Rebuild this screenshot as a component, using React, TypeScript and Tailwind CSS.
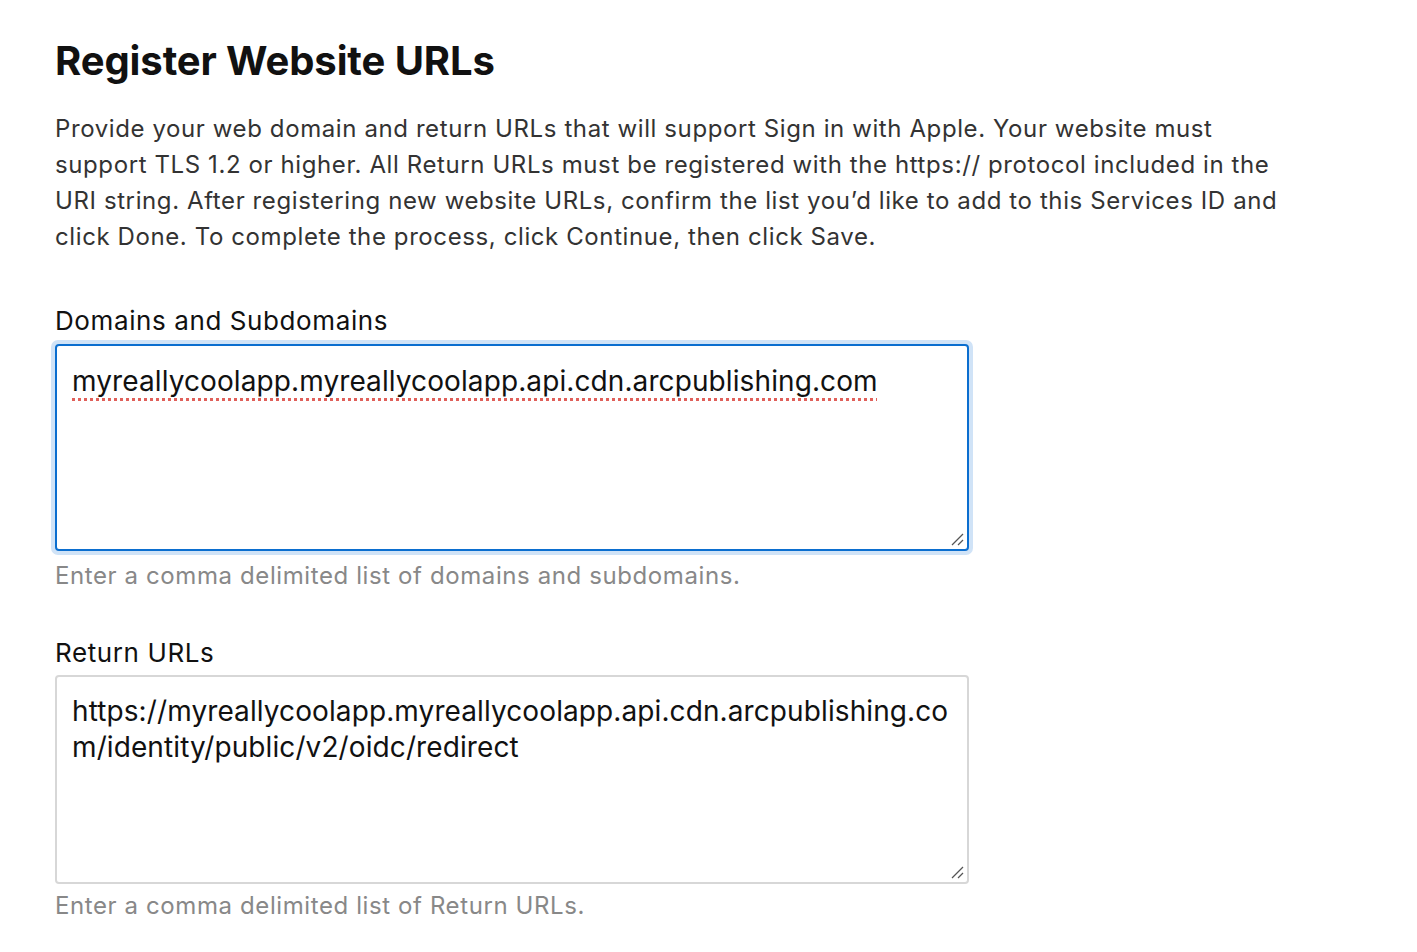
import React from "react";

function ResizeHandle() {
  return (
    <svg
      className="absolute right-[3px] bottom-[3px]"
      width="14"
      height="14"
      viewBox="0 0 14 14"
    >
      <line x1="2" y1="13" x2="13" y2="2" stroke="#555" strokeWidth="1.3" />
      <line x1="8" y1="13" x2="13" y2="8" stroke="#555" strokeWidth="1.3" />
    </svg>
  );
}

export default function App() {
  return (
    <div
      className="min-h-screen bg-white text-[#1d1d1f]"
      style={{ fontFamily: "Inter, 'Noto Sans', sans-serif" }}
    >
      <div className="pl-[55px] pt-[37px]">
        <h1 className="text-[40px] leading-[48px] font-bold tracking-[-0.1px] text-[#111]">
          Register Website URLs
        </h1>
        <p className="mt-[26px] text-[24px] leading-[36px] tracking-[0.6px] text-[#333] whitespace-nowrap">
          Provide your web domain and return URLs that will support Sign in with Apple. Your website must
          <br />
          support TLS 1.2 or higher. All Return URLs must be registered with the https:// protocol included in the
          <br />
          URI string. After registering new website URLs, confirm the list you’d like to add to this Services ID and
          <br />
          click Done. To complete the process, click Continue, then click Save.
        </p>

        <div className="mt-[50px] w-[914px]">
          <div className="text-[26px] leading-[32px] tracking-[0.6px] text-[#111]">Domains and Subdomains</div>
          <div className="mt-[3px] rounded-[7px] bg-[#d0e3f7] p-[4px] -ml-[4px] w-[922px]">
            <div className="relative h-[207px] rounded-[4px] border-2 border-[#0b6ecf] bg-white px-[15px] pt-[17px]">
              <div className="text-[28px] leading-[36px] tracking-[0.1px] text-[#111] whitespace-nowrap">
                <span className="underline decoration-dotted decoration-[#e0605a] decoration-[3px] underline-offset-[7px]">
                  myreallycoolapp.myreallycoolapp.api.cdn.arcpublishing.com
                </span>
              </div>
              <ResizeHandle />
            </div>
          </div>
          <div className="mt-[3px] text-[24px] leading-[36px] tracking-[0.6px] text-[#888]">
            Enter a comma delimited list of domains and subdomains.
          </div>
        </div>

        <div className="mt-[43px] w-[914px]">
          <div className="text-[26px] leading-[32px] tracking-[0.6px] text-[#111]">Return URLs</div>
          <div className="relative mt-[6px] h-[209px] rounded-[4px] border-2 border-[#d7d7d7] bg-white px-[15px] pt-[16px]">
            <div className="text-[28px] leading-[36px] tracking-[0.1px] text-[#111] whitespace-nowrap">
              https://myreallycoolapp.myreallycoolapp.api.cdn.arcpublishing.co
              <br />
              m/identity/public/v2/oidc/redirect
            </div>
            <ResizeHandle />
          </div>
          <div className="mt-[4px] text-[24px] leading-[36px] tracking-[0.6px] text-[#888]">
            Enter a comma delimited list of Return URLs.
          </div>
        </div>
      </div>
    </div>
  );
}
